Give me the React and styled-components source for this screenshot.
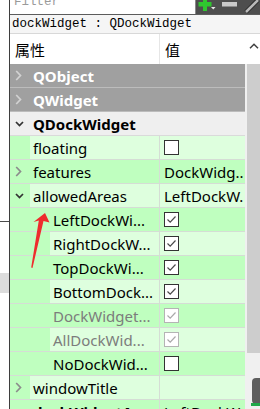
import React from "react";
import styled, { createGlobalStyle } from "styled-components";

const GlobalStyle = createGlobalStyle`
  html, body { margin: 0; padding: 0; background: #ffffff; }
  body { font-family: "Noto Sans", "Noto Sans CJK SC", sans-serif; }
`;

const DARK = "#bfffbf";
const LIGHT = "#deffde";
const GRID = "#d5ddd5";

const Page = styled.div`
  position: relative;
  width: 260px;
  height: 409px;
  overflow: hidden;
  display: flex;
  background: #ffffff;
`;

const Gutter = styled.div`
  width: 9px;
  flex: none;
  display: flex;
  flex-direction: column;
`;

const GutterLine = styled.div`
  margin-top: 221px;
  height: 1px;
  background: #4a4a4a;
`;

const GutterBlock = styled.div`
  margin-top: 51px;
  height: 20px;
  background: #dcdcdc;
`;

const Panel = styled.div`
  flex: 1;
  min-width: 0;
  display: flex;
  flex-direction: column;
  border-left: 1px solid #3e3e3e;
`;

const TopRow = styled.div`
  display: flex;
  height: 15px;
  flex: none;
  border-bottom: 1px solid #5c5c5c;
  box-sizing: border-box;
`;

const FilterBox = styled.div`
  flex: 1;
  background: #ffffff;
  overflow: hidden;
  border-right: 1px solid #8a8a8a;
  padding-left: 4px;
  font-family: "Liberation Mono", monospace;
  font-size: 12.5px;
  color: #9a9a9a;
`;

const FilterText = styled.div`
  line-height: 15px;
  margin-top: -5px;
`;

const Toolbar = styled.div`
  width: 64px;
  flex: none;
  background: #4e4e4e;
  display: flex;
`;

const ObjectBar = styled.div`
  height: 19px;
  flex: none;
  box-sizing: border-box;
  background: #f5f5f5;
  border-bottom: 1px solid #d8d8d8;
  display: flex;
  align-items: center;
  padding-left: 2px;
  font-family: "Liberation Mono", monospace;
  font-size: 12.5px;
  color: #000;
  white-space: nowrap;
`;

const Body = styled.div`
  flex: 1;
  display: flex;
  min-height: 0;
`;

const Tree = styled.div`
  flex: 1;
  min-width: 0;
  display: flex;
  flex-direction: column;
`;

const HeaderRow = styled.div`
  display: grid;
  grid-template-columns: 150px 1fr;
  height: 30px;
  flex: none;
  background: #ffffff;
`;

const HeaderCell = styled.div`
  display: flex;
  align-items: center;
  padding-left: 5px;
  font-family: "Noto Sans CJK SC", sans-serif;
  font-size: 15px;
  color: #000;
  border-right: ${(p) => (p.$first ? "1px solid #e6e6e6" : "none")};
`;

const CatRow = styled.div`
  display: flex;
  align-items: center;
  height: 24px;
  flex: none;
  box-sizing: border-box;
  background: ${(p) => (p.$gray ? "#a0a0a0" : "#efefef")};
  border-bottom: 1px solid ${(p) => (p.$gray ? "#bcbcbc" : "#dadada")};
`;

const CatBranch = styled.div`
  width: 20px;
  flex: none;
  display: flex;
  align-items: center;
  padding-left: 5px;
  box-sizing: border-box;
`;

const CatLabel = styled.div`
  padding-left: 3px;
  font-size: 15px;
  font-weight: 700;
  color: ${(p) => (p.$gray ? "#ffffff" : "#000000")};
  white-space: nowrap;
`;

const PropRow = styled.div`
  display: grid;
  grid-template-columns: 150px 1fr;
  height: 24px;
  flex: none;
  box-sizing: border-box;
  border-bottom: 1px solid ${GRID};
`;

const NameCell = styled.div`
  display: flex;
  min-width: 0;
  border-right: 1px solid ${GRID};
`;

const Branch = styled.div`
  width: ${(p) => p.$width}px;
  flex: none;
  background: ${DARK};
  display: flex;
  align-items: center;
  padding-left: 5px;
  box-sizing: border-box;
`;

const Label = styled.div`
  flex: 1;
  min-width: 0;
  display: flex;
  align-items: center;
  padding-left: 3px;
  background: ${(p) => (p.$dark ? DARK : LIGHT)};
  font-size: 15px;
  font-weight: ${(p) => (p.$bold ? 700 : 400)};
  color: ${(p) => (p.$disabled ? "#7c7c7c" : "#000000")};
  white-space: nowrap;
  overflow: hidden;
`;

const ValueCell = styled.div`
  display: flex;
  align-items: center;
  padding-left: 4px;
  min-width: 0;
  overflow: hidden;
  background: ${(p) => (p.$dark ? DARK : LIGHT)};
  font-size: 15px;
  color: #000;
  white-space: nowrap;
`;

const Box = styled.div`
  width: 15px;
  height: 15px;
  box-sizing: border-box;
  background: #ffffff;
  border: 1px solid ${(p) => (p.$disabled ? "#b4b4b4" : "#333333")};
  display: flex;
  align-items: center;
  justify-content: center;
`;

const Scrollbar = styled.div`
  width: 15px;
  flex: none;
  display: flex;
  flex-direction: column;
  background: #f0f0f0;
`;

const ScrollArrow = styled.div`
  height: 30px;
  flex: none;
  display: flex;
  align-items: center;
  justify-content: center;
  padding-left: 3px;
  padding-bottom: 6px;
  box-sizing: border-box;
  background: #ffffff;
`;

const Thumb = styled.div`
  height: 289px;
  flex: none;
  margin-left: 2px;
  background: #cdcdcd;
`;

const Overlay = styled.svg`
  position: absolute;
  left: 0;
  top: 0;
  pointer-events: none;
`;

const ChevronRight = ({ color }) => (
  <svg width="7" height="11" viewBox="0 0 7 11">
    <polyline points="1.2,1 5.5,5.5 1.2,10" fill="none" stroke={color} strokeWidth="1.7" />
  </svg>
);

const ChevronDown = ({ color }) => (
  <svg width="9" height="6" viewBox="0 0 9 6">
    <polyline points="1,1 4.5,4.6 8,1" fill="none" stroke={color} strokeWidth="1.7" />
  </svg>
);

const CheckBox = ({ checked, disabled }) => (
  <Box $disabled={disabled}>
    {checked && (
      <svg width="11" height="11" viewBox="0 0 11 11">
        <polyline
          points="1.5,5.5 4.2,8.2 9.5,2.5"
          fill="none"
          stroke={disabled ? "#a9a9a9" : "#4a4a4a"}
          strokeWidth="1.2"
        />
      </svg>
    )}
  </Box>
);

const categories = [
  { label: "QObject", gray: true, open: false },
  { label: "QWidget", gray: true, open: false },
  { label: "QDockWidget", gray: false, open: true },
];

const props = [
  { label: "floating", level: 0, value: { check: false } },
  { label: "features", level: 0, expand: "right", value: { text: "DockWidg.." } },
  { label: "allowedAreas", level: 0, expand: "down", value: { text: "LeftDockW." } },
  { label: "LeftDockWi...", level: 1, value: { check: true } },
  { label: "RightDockW...", level: 1, value: { check: true } },
  { label: "TopDockWi...", level: 1, value: { check: true } },
  { label: "BottomDock...", level: 1, value: { check: true } },
  { label: "DockWidget...", level: 1, disabled: true, value: { check: true } },
  { label: "AllDockWid...", level: 1, disabled: true, value: { check: true } },
  { label: "NoDockWid...", level: 1, value: { check: false } },
  { label: "windowTitle", level: 0, expand: "right", value: { text: "" } },
  { label: "dockWidgetArea", level: 0, bold: true, value: { text: "LeftDockW..." } },
];

export default function App() {
  return (
    <>
      <GlobalStyle />
      <Page>
        <Gutter>
          <GutterLine />
          <GutterBlock />
        </Gutter>
        <Panel>
          <TopRow>
            <FilterBox>
              <FilterText>Filter</FilterText>
            </FilterBox>
            <Toolbar>
              <svg width="64" height="14" viewBox="0 0 64 14">
                <rect x="7" y="0" width="4" height="11" fill="#2fc72f" />
                <rect x="2.5" y="2" width="13" height="4.5" fill="#2fc72f" />
                <polygon points="15,7 19.5,7 17.25,9.5" fill="#e8e8e8" />
                <rect x="26" y="2" width="15" height="4.5" fill="#c9c9c9" />
                <line x1="50" y1="12" x2="62" y2="0" stroke="#2c2c2c" strokeWidth="4.5" />
                <line x1="50" y1="12" x2="62" y2="0" stroke="#b9b9b9" strokeWidth="2.5" />
              </svg>
            </Toolbar>
          </TopRow>
          <ObjectBar>dockWidget : QDockWidget</ObjectBar>
          <Body>
            <Tree>
              <HeaderRow>
                <HeaderCell $first>属性</HeaderCell>
                <HeaderCell>值</HeaderCell>
              </HeaderRow>
              {categories.map((c) => (
                <CatRow key={c.label} $gray={c.gray}>
                  <CatBranch>
                    {c.open ? <ChevronDown color="#333333" /> : <ChevronRight color="#d2d2d2" />}
                  </CatBranch>
                  <CatLabel $gray={c.gray}>{c.label}</CatLabel>
                </CatRow>
              ))}
              {props.map((p, i) => {
                const dark = i % 2 === 1;
                return (
                  <PropRow key={p.label}>
                    <NameCell>
                      <Branch $width={20 * (p.level + 1)}>
                        {p.expand === "right" && <ChevronRight color="#8c8c8c" />}
                        {p.expand === "down" && <ChevronDown color="#333333" />}
                      </Branch>
                      <Label $dark={dark} $bold={p.bold} $disabled={p.disabled}>
                        {p.label}
                      </Label>
                    </NameCell>
                    <ValueCell $dark={dark}>
                      {"check" in p.value ? (
                        <CheckBox checked={p.value.check} disabled={p.disabled} />
                      ) : (
                        p.value.text
                      )}
                    </ValueCell>
                  </PropRow>
                );
              })}
            </Tree>
            <Scrollbar>
              <ScrollArrow>
                <svg width="10" height="6" viewBox="0 0 10 6">
                  <polyline points="1,5.2 5,1.2 9,5.2" fill="none" stroke="#404040" strokeWidth="1.5" />
                </svg>
              </ScrollArrow>
              <Thumb />
            </Scrollbar>
          </Body>
        </Panel>
        <Overlay width="260" height="409" viewBox="0 0 260 409">
          <polygon
            points="45,213 49.5,222.5 43.5,221 32.5,268 31.2,267.5 38.8,220.5 33.5,222"
            fill="#ee2d2d"
          />
          <rect x="252" y="378" width="12" height="26" rx="4" fill="#5e5e5e" />
          <rect x="251" y="403" width="9" height="3" fill="#1fa84a" />
        </Overlay>
      </Page>
    </>
  );
}
